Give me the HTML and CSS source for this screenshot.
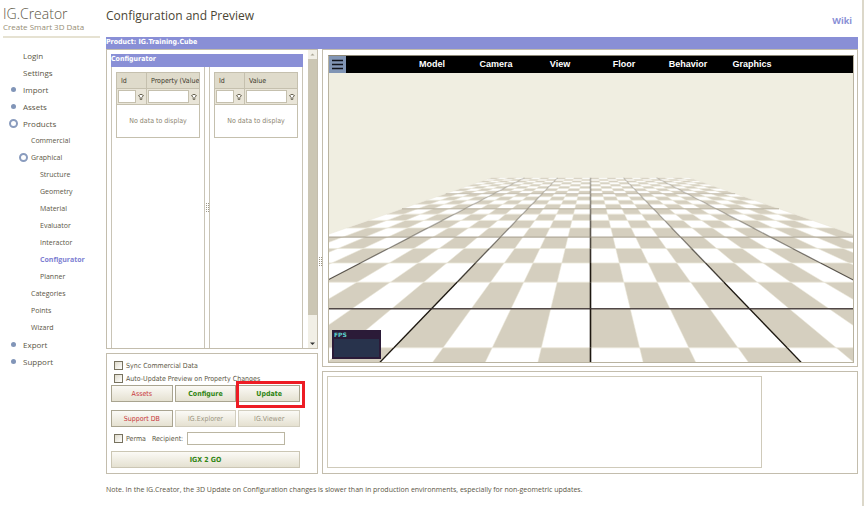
FILE: index.html
```
<!DOCTYPE html>
<html lang="en">
<head>
<meta charset="utf-8">
<title>IG.Creator - Configuration and Preview</title>
<link rel="stylesheet" href="styles.css">
</head>
<body>
<div class="page">
  <aside class="sidebar">
    <div class="brand">
      <div class="brand-name">IG.Creator</div>
      <div class="brand-tag">Create Smart 3D Data</div>
    </div>
    <nav class="nav">
      <a href="#">Login</a>
      <a href="#">Settings</a>
      <a href="#" class="dot">Import</a>
      <a href="#" class="dot">Assets</a>
      <a href="#" class="ring">Products</a>
      <a href="#" class="sub">Commercial</a>
      <a href="#" class="sub ring">Graphical</a>
      <a href="#" class="leaf">Structure</a>
      <a href="#" class="leaf">Geometry</a>
      <a href="#" class="leaf">Material</a>
      <a href="#" class="leaf">Evaluator</a>
      <a href="#" class="leaf">Interactor</a>
      <a href="#" class="leaf current">Configurator</a>
      <a href="#" class="leaf">Planner</a>
      <a href="#" class="sub">Categories</a>
      <a href="#" class="sub">Points</a>
      <a href="#" class="sub">Wizard</a>
      <a href="#" class="dot">Export</a>
      <a href="#" class="dot">Support</a>
    </nav>
  </aside>

  <main class="main">
    <header class="top">
      <h1>Configuration and Preview</h1>
      <a href="#" class="wiki">Wiki</a>
    </header>
    <h2 class="bar product">Product: IG.Training.Cube</h2>
    <div class="work">
      <div class="left">
        <section class="panel config">
          <div class="config-body">
            <h3 class="bar">Configurator</h3>
            <div class="lists">
              <div class="list">
                <table>
                  <thead>
                    <tr><th class="id">Id</th><th>Property (Value)</th></tr>
                    <tr class="filters">
                      <td><div class="filter"><input type="text" aria-label="Filter property id"><svg viewBox="0 0 7 8"><path d="M1 2.500Q3.500 0 6 2.500L4.300 4.500V6.500H2.700V4.500z"/></svg></div></td>
                      <td><div class="filter"><input type="text" aria-label="Filter property"><svg viewBox="0 0 7 8"><path d="M1 2.500Q3.500 0 6 2.500L4.300 4.500V6.500H2.700V4.500z"/></svg></div></td>
                    </tr>
                  </thead>
                  <tbody><tr><td colspan="2" class="empty">No data to display</td></tr></tbody>
                </table>
              </div>
              <div class="grip"></div>
              <div class="list">
                <table>
                  <thead>
                    <tr><th class="id">Id</th><th>Value</th></tr>
                    <tr class="filters">
                      <td><div class="filter"><input type="text" aria-label="Filter value id"><svg viewBox="0 0 7 8"><path d="M1 2.500Q3.500 0 6 2.500L4.300 4.500V6.500H2.700V4.500z"/></svg></div></td>
                      <td><div class="filter"><input type="text" aria-label="Filter value"><svg viewBox="0 0 7 8"><path d="M1 2.500Q3.500 0 6 2.500L4.300 4.500V6.500H2.700V4.500z"/></svg></div></td>
                    </tr>
                  </thead>
                  <tbody><tr><td colspan="2" class="empty">No data to display</td></tr></tbody>
                </table>
              </div>
            </div>
          </div>
          <div class="scroll">
            <svg viewBox="0 0 9 9"><path d="M2.500 5.500h4l-2-2z" fill="#aaa593"/></svg>
            <div class="thumb"></div>
            <svg viewBox="0 0 9 9"><path d="M2 3.500h5l-2.500 2.500z" fill="#333"/></svg>
          </div>
        </section>

        <section class="panel actions">
          <label class="check"><input type="checkbox">Sync Commercial Data</label>
          <label class="check"><input type="checkbox">Auto-Update Preview on Property Changes</label>
          <div class="buttons">
            <button class="red">Assets</button>
            <button class="green">Configure</button>
            <div class="marked"><button class="green">Update</button></div>
            <button class="red">Support DB</button>
            <button disabled>IG.Explorer</button>
            <button disabled>IG.Viewer</button>
          </div>
          <div class="send">
            <label class="check"><input type="checkbox">Perma</label>
            <label for="recipient">Recipient:</label>
            <input type="text" id="recipient">
          </div>
          <button class="green go">IGX 2 GO</button>
        </section>
      </div>

      <div class="grip"></div>

      <div class="right">
        <section class="panel preview">
          <div class="viewer">
            <div class="menu">
              <button class="burger" aria-label="Menu"><svg viewBox="0 0 17 17"><path d="M3 4.500h11M3 8.500h11M3 12.500h11" stroke="#10131c" stroke-width="1.500"/></svg></button>
              <div class="menu-items">
                <a href="#">Model</a><a href="#">Camera</a><a href="#">View</a><a href="#">Floor</a><a href="#">Behavior</a><a href="#">Graphics</a>
              </div>
            </div>
            <div class="scene">
              <svg id="floor" viewBox="0 0 526 289" preserveAspectRatio="xMidYMax slice"></svg>
              <div class="fps">FPS<div class="graph"></div></div>
            </div>
          </div>
        </section>
        <section class="panel output">
          <textarea aria-label="Output"></textarea>
        </section>
      </div>
    </div>
    <p class="note">Note. In the IG.Creator, the 3D Update on Configuration changes is slower than in production environments, especially for non-geometric updates.</p>
  </main>
</div>
<script src="floor.js"></script>
</body>
</html>
```
FILE: floor.js
```
// Draws the checkered floor in one-point perspective.
const NS = "http://www.w3.org/2000/svg";
const svg = document.getElementById("floor");
const CX = 262.5, HORIZON = 70.5, COLS = 12, NEAR = -2, FAR = 20;
const depth = r => 1 / (0.006053 + 0.001158 * r);
const y = r => HORIZON + depth(r);
const x = (c, r) => CX + 0.2406 * c * depth(r);

function add(name, attrs) {
  const el = document.createElementNS(NS, name);
  for (const k in attrs) el.setAttribute(k, attrs[k]);
  svg.appendChild(el);
}
const pt = (c, r) => x(c, r).toFixed(2) + " " + y(r).toFixed(2);

add("path", { fill: "#fff", d: `M${pt(-COLS, NEAR)}L${pt(-COLS, FAR)}L${pt(COLS, FAR)}L${pt(COLS, NEAR)}z` });

let tiles = "";
for (let r = NEAR; r < FAR; r++)
  for (let c = -COLS; c < COLS; c++)
    if ((c + r) & 1)
      tiles += `M${pt(c, r)}L${pt(c + 1, r)}L${pt(c + 1, r + 1)}L${pt(c, r + 1)}z`;
add("path", { fill: "#d5cfbf", d: tiles });

// Thin tile joints, then the heavier guide lines, both fading with distance.
for (let r = NEAR + 1; r <= FAR; r++)
  add("path", { stroke: "#ebe7d9", "stroke-width": 1, opacity: Math.min(0.8, depth(r) / 90), d: `M${pt(-COLS, r)}L${pt(COLS, r)}` });
for (let r = NEAR; r < FAR; r++) {
  const near = depth(r + 0.5) / depth(0);
  for (let c = -COLS; c <= COLS; c++) {
    const main = c % 4 === 0 && Math.abs(c) < COLS;
    const fade = c === 0 ? Math.min(1, near * 1.3) : Math.min(1, near * near * (c % 8 ? 1.2 : 1) + 0.1);
    add("path", {
      stroke: main ? "#1c1710" : "#ebe7d9",
      "stroke-width": main ? (c === 0 ? 1.6 : 1.3) : 0.7,
      opacity: main ? fade : 0.8,
      d: `M${pt(c, r)}L${pt(c, r + 1)}`
    });
  }
}
[[0, 0.85, "#352c2c"], [4, 0.6, "#8c8473"], [8, 0.45, "#9b937f"], [12, 0.4, "#a39c8a"]].forEach(([r, o, s]) =>
  add("path", { stroke: s, "stroke-width": 1.4, opacity: o, d: `M${pt(-COLS, r)}L${pt(COLS, r)}` }));
```
FILE: styles.css
```
*, *::before, *::after { box-sizing: border-box; }
body {
  margin: 0;
  background: #fff;
  color: #5b5645;
  font-family: "Open Sans", "Noto Sans", sans-serif;
  font-size: 7px;
  line-height: 10px;
}
a { color: inherit; text-decoration: none; }
h1, h2, h3, p { margin: 0; }
button, input, textarea { font: inherit; margin: 0; border-radius: 0; }

.page {
  display: flex;
  min-height: 100vh;
  padding-right: 4px;
  border-right: 2px solid #dcd8ca;
}
.sidebar { width: 106px; flex: none; }
.brand {
  margin: 5px 6px 0 3px;
  height: 33px;
  border-bottom: 2px solid #e6e2d2;
}
.brand-name { font-weight: 300; font-size: 14px; line-height: 17px; }
.brand-tag { font-size: 8px; line-height: 10px; color: #958d75; }

.nav { padding: 9px 0 0 23px; }
.nav a {
  display: flex;
  align-items: center;
  height: 17px;
  font-size: 8px;
  position: relative;
}
.nav .sub { margin-left: 8px; font-size: 7px; }
.nav .leaf { margin-left: 17px; font-size: 7px; }
.nav .current { color: #7d80d2; font-weight: 700; }
.dot::before, .ring::before {
  content: "";
  position: absolute;
  border-radius: 50%;
}
.dot::before { left: -12px; width: 5px; height: 5px; background: #8195b8; }
.ring::before { left: -14px; width: 9px; height: 9px; border: 2px solid #8a9cbe; }
.sub.ring::before { left: -12px; }

.main { flex: 1; min-width: 0; }
.top {
  display: flex;
  justify-content: space-between;
  height: 37px;
  padding: 7px 6px 0 0;
}
h1 { font-size: 12px; line-height: 18px; font-weight: 400; color: #4a4534; }
.wiki { align-self: end; padding-bottom: 10px; font-size: 9px; line-height: 12px; font-weight: 700; color: #898fd6; }
.bar {
  height: 13px;
  background: #898fd6;
  color: #fff;
  font-family: "DejaVu Sans Condensed", "DejaVu Sans", sans-serif;
  font-size: 7px;
  line-height: 10px;
  font-weight: 700;
}
.product { height: 12px; }

.work { display: flex; }
.left { width: 212px; flex: none; display: flex; flex-direction: column; gap: 4px; }
.right { flex: 1; min-width: 0; display: flex; flex-direction: column; gap: 4px; }
.panel { border: 1px solid #c3bdad; }
.grip {
  width: 4px;
  flex: none;
  display: flex;
  align-items: center;
  justify-content: center;
}
.grip::before {
  content: "";
  width: 3px;
  height: 9px;
  background:
    linear-gradient(90deg, transparent 1px, #fff 1px 2px, transparent 2px),
    repeating-linear-gradient(#9d9888 0 1px, #fff 1px 2px);
}

.config { display: flex; height: 300px; justify-content: space-between; }
.config-body { flex: 1; margin: 4px 5px 0 4px; display: flex; flex-direction: column; }
.lists { flex: 1; display: flex; }
.list {
  flex: 1;
  min-width: 0;
  padding: 5px 4px;
  border: solid #c9c4b6;
  border-width: 0 1px;
}
table {
  width: 100%;
  table-layout: fixed;
  border-collapse: collapse;
  border: 1px solid #c5c0ae;
  font-family: "DejaVu Sans Condensed", "DejaVu Sans", sans-serif;
}
th {
  height: 16px;
  padding: 0 0 0 4px;
  background: #dfdbcb;
  border: 1px solid #c5c0ae;
  color: #3c382b;
  font-weight: 400;
  text-align: left;
  white-space: nowrap;
  overflow: hidden;
}
.id { width: 30px; }
.filters td { height: 16px; padding: 0; background: #e9e5d8; border: solid #c5c0ae; border-width: 0 1px 1px; }
.filter { display: flex; align-items: center; gap: 1px; padding: 0 1px; }
.filter input { flex: 1; min-width: 0; width: 0; height: 13px; padding: 0; border: 1px solid #c5c0ae; }
.filter svg { width: 8px; height: 8px; flex: none; fill: #fff; stroke: #6b6654; }
.empty { height: 33px; padding: 0; text-align: center; color: #8c8570; }

.scroll { width: 9px; flex: none; display: flex; flex-direction: column; background: #f1efe6; }
.scroll svg { height: 9px; display: block; }
.thumb { height: 256px; margin-bottom: auto; background: #cbc6b4; }

.actions {
  height: 121px;
  padding: 5px 17px 4px 4px;
  font-family: "DejaVu Sans Condensed", "DejaVu Sans", sans-serif;
}
.check { display: flex; align-items: center; gap: 3px; height: 13px; padding-left: 3px; white-space: nowrap; }
input[type="checkbox"] {
  appearance: none;
  width: 9px;
  height: 9px;
  border: 1px solid #77725f;
  background: linear-gradient(135deg, #dedacb, #fff);
}
.buttons { display: grid; grid-template-columns: repeat(3, 1fr); gap: 8px 2px; }
.buttons button, .go {
  width: 100%;
  height: 17px;
  padding: 0;
  border: 1px solid #a9a490;
  background: linear-gradient(#fbfaf6, #e5e1d1);
  color: #9b9581;
}
.buttons button:disabled { border-color: #d2cebf; }
.actions .red { color: #c8373b; }
.actions .green { color: #2f8512; font-weight: 700; }
.marked { position: relative; }
.marked::after {
  content: "";
  position: absolute;
  inset: -4px -5px -6px -2px;
  border: 3px solid #ed1c24;
}
.send { display: flex; align-items: center; gap: 6px; margin: 5px 0 6px; }
.send input[type="text"] { width: 98px; height: 13px; margin-left: -2px; border: 1px solid #bbb6a2; }
.go { display: block; border-color: #cbc6b4; }

.preview { height: 318px; padding: 5px 3px 3px 5px; }
.viewer { height: 100%; display: flex; flex-direction: column; border: 1px solid #b9b3a0; border-top-color: #8d8876; }
.menu { height: 17px; display: flex; background: #000; }
.burger { width: 17px; padding: 0; border: 0; background: #8195b5; }
.burger svg { display: block; }
.menu-items { flex: 1; display: flex; padding-left: 54px; }
.menu-items a {
  width: 64px;
  color: #fff;
  text-align: center;
  font: 700 9px/17px "Liberation Sans", sans-serif;
}
.scene { flex: 1; min-height: 0; position: relative; background: #f0eee1; }
.scene > svg { display: block; width: 100%; height: 100%; fill: none; }
.fps {
  position: absolute;
  left: 3px;
  bottom: 3px;
  width: 49px;
  height: 29px;
  padding: 0 2px 2px;
  background: #2b1b38;
  color: #5cd0cd;
  font: 700 6px/9px "DejaVu Sans", sans-serif;
}
.graph { height: 18px; background: #28334c; }
.output { height: 103px; padding: 4px; }
.output textarea {
  display: block;
  width: calc(100% - 91px);
  height: 92px;
  resize: none;
  border: 1px solid #cfcaba;
}
.note { padding: 11px 0; }
```
